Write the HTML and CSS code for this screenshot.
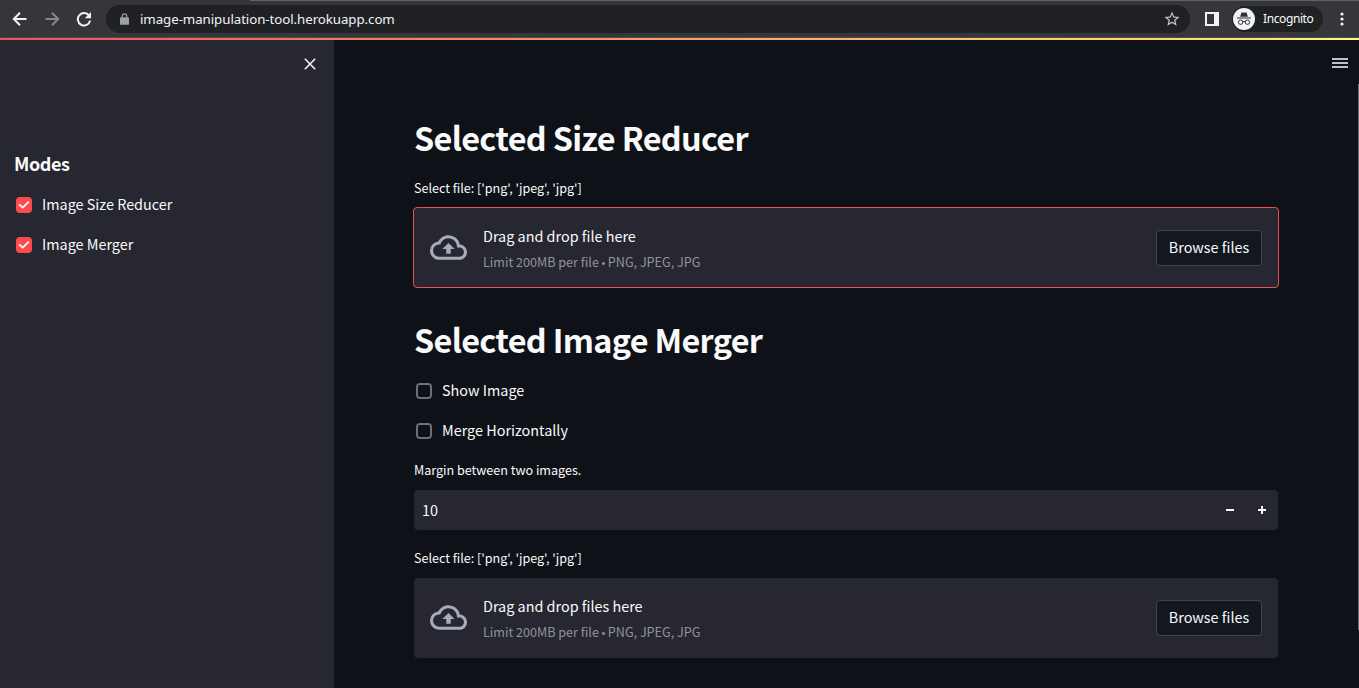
FILE: index.html
```
<!DOCTYPE html>
<html lang="en">
<head>
<meta charset="utf-8">
<title>Image Manipulation Tool</title>
<link rel="stylesheet" href="styles.css">
</head>
<body>
<header class="browser">
  <svg class="nav back" viewBox="0 0 16 16"><path d="M14.500 8H2M8 1.800 1.800 8 8 14.200"/></svg>
  <svg class="nav forward" viewBox="0 0 16 16"><path d="M1.500 8H14M8 1.800 14.200 8 8 14.200"/></svg>
  <svg class="nav reload" viewBox="0 0 16 16"><path d="M13.300 5A6.200 6.200 0 1 0 14.100 9.600"/><path class="solid" d="M15 1v6.200H8.800z"/></svg>
  <div class="address">
    <svg class="lock" viewBox="0 0 10 13"><path d="M1 4.500h8a1 1 0 0 1 1 1V12a1 1 0 0 1-1 1H1a1 1 0 0 1-1-1V5.500a1 1 0 0 1 1-1z"/><path class="shackle" d="M2.500 5V3.200a2.500 2.500 0 0 1 5 0V5"/></svg>
    <span class="url">image-manipulation-tool.herokuapp.com</span>
    <svg class="star" viewBox="0 0 24 24"><path d="M22 9.240l-7.190-.62L12 2 9.190 8.630 2 9.240l5.460 4.730L5.820 21 12 17.270 18.180 21l-1.630-7.030zM12 15.400l-3.760 2.270 1-4.280-3.320-2.880 4.380-.38L12 6.100l1.710 4.040 4.380.38-3.320 2.880 1 4.280z"/></svg>
  </div>
  <svg class="panel" viewBox="0 0 14 14"><path fill-rule="evenodd" d="M0 0h14v14H0zM2 2v10h7V2z"/></svg>
  <div class="incognito">
    <svg class="avatar" viewBox="0 0 22 22"><circle cx="11" cy="11" r="11" fill="#f1f3f4"/><path fill="#303134" d="M7.100 8.700 8.300 4.900c.1-.5.600-.7 1-.5l1.700.4 1.700-.4c.4-.2.9 0 1 .5l1.200 3.800zM4 9.500h14v1H4z"/><g fill="none" stroke="#303134"><circle cx="7.600" cy="14.200" r="2.200"/><circle cx="14.400" cy="14.200" r="2.200"/><path d="M9.800 13.900q1.200-.7 2.400 0"/></g></svg>
    <span>Incognito</span>
  </div>
  <svg class="dots" viewBox="0 0 4 14"><circle cx="2" cy="2" r="1.600"/><circle cx="2" cy="7" r="1.600"/><circle cx="2" cy="12" r="1.600"/></svg>
</header>
<div class="decoration"></div>
<div class="app">
  <aside class="sidebar">
    <div class="close-row"><svg class="close" viewBox="0 0 12 12"><path d="M.8.8l10.400 10.400M11.200.8.8 11.200"/></svg></div>
    <h3 class="modes">Modes</h3>
    <label class="check"><span class="box checked"><svg viewBox="0 0 16 16"><path d="M3.600 7.800 6.700 10.700l5.600-5.500"/></svg></span><span class="check-text">Image Size Reducer</span></label>
    <label class="check"><span class="box checked"><svg viewBox="0 0 16 16"><path d="M3.600 7.800 6.700 10.700l5.600-5.500"/></svg></span><span class="check-text">Image Merger</span></label>
  </aside>
  <main class="main">
    <div class="content">
      <h1 class="title reducer-title">Selected Size Reducer</h1>
      <p class="label">Select file: ['png', 'jpeg', 'jpg']</p>
      <section class="dropzone active">
        <svg class="cloud" viewBox="0 0 24 24"><path d="M19.350 10.040A7.490 7.490 0 0 0 12 4C9.110 4 6.600 5.640 5.350 8.040A5.994 5.994 0 0 0 0 14c0 3.310 2.690 6 6 6h13c2.760 0 5-2.240 5-5 0-2.640-2.050-4.780-4.650-4.960zM19 18H6c-2.210 0-4-1.790-4-4s1.790-4 4-4h.710C7.370 7.690 9.480 6 12 6c3.040 0 5.500 2.460 5.500 5.500v.5H19c1.660 0 3 1.340 3 3s-1.340 3-3 3zM8 13h2.550v3h2.900v-3H16l-4-4z"/></svg>
        <div class="drop-text"><span class="drop-title">Drag and drop file here</span><small class="limit">Limit 200MB per file <span class="bullet">•</span> PNG, JPEG, JPG</small></div>
        <button class="browse">Browse files</button>
      </section>
      <h1 class="title merger-title">Selected Image Merger</h1>
      <label class="check"><span class="box"></span><span class="check-text">Show Image</span></label>
      <label class="check"><span class="box"></span><span class="check-text">Merge Horizontally</span></label>
      <p class="label margin-label">Margin between two images.</p>
      <div class="number"><span class="value">10</span>
        <svg class="step" viewBox="0 0 8 8"><path d="M0 4h8"/></svg>
        <svg class="step" viewBox="0 0 8 8"><path d="M0 4h8M4 0v8"/></svg>
      </div>
      <p class="label files-label">Select file: ['png', 'jpeg', 'jpg']</p>
      <section class="dropzone">
        <svg class="cloud" viewBox="0 0 24 24"><path d="M19.350 10.040A7.490 7.490 0 0 0 12 4C9.110 4 6.600 5.640 5.350 8.040A5.994 5.994 0 0 0 0 14c0 3.310 2.690 6 6 6h13c2.760 0 5-2.240 5-5 0-2.640-2.050-4.780-4.650-4.960zM19 18H6c-2.210 0-4-1.790-4-4s1.790-4 4-4h.710C7.370 7.690 9.480 6 12 6c3.040 0 5.500 2.460 5.500 5.500v.5H19c1.660 0 3 1.340 3 3s-1.340 3-3 3zM8 13h2.550v3h2.900v-3H16l-4-4z"/></svg>
        <div class="drop-text"><span class="drop-title">Drag and drop files here</span><small class="limit">Limit 200MB per file <span class="bullet">•</span> PNG, JPEG, JPG</small></div>
        <button class="browse">Browse files</button>
      </section>
    </div>
    <svg class="menu" viewBox="0 0 16 10"><path d="M0 1h16M0 5h16M0 9h16"/></svg>
    <div class="scrollbar"></div>
  </main>
</div>
</body>
</html>
```
FILE: styles.css
```
* { box-sizing: border-box; }
body {
  margin: 0;
  height: 688px;
  overflow: hidden;
  display: flex;
  flex-direction: column;
  background: #0e1117;
  color: #fafafa;
  font: 14.4px/24px "Noto Sans CJK SC", "Noto Sans", sans-serif;
}
h1, h3, p { margin: 0; }
svg { display: block; flex: none; }

.browser {
  height: 38px;
  flex: none;
  display: flex;
  align-items: center;
  padding: 1px 0 1px 12px;
  background: linear-gradient(90deg, #35363a 250px, #5f6165 250px) 0 0 / 100% 1px no-repeat #35363a;
  border-bottom: 1px solid #4a4b4f;
  font-family: "Noto Sans", sans-serif;
}
.nav { width: 16px; height: 16px; margin-right: 16px; fill: none; stroke: #f1f3f4; stroke-width: 2; }
.forward { stroke: #85878a; }
.reload { margin-right: 14px; }
.reload .solid { fill: #f1f3f4; stroke: none; }
.address {
  width: 1084px;
  height: 28px;
  display: flex;
  align-items: center;
  padding: 0 9px 0 14px;
  border-radius: 14px;
  background: #202124;
}
.lock { width: 9px; height: 12px; fill: #9aa0a6; overflow: visible; }
.lock .shackle { fill: none; stroke: #9aa0a6; stroke-width: 1.4; }
.url { margin-left: 11px; flex: 1; font-size: 13.3px; color: #f1f3f4; letter-spacing: -.07px; }
.star { width: 18px; height: 18px; fill: #c4c7ca; }
.panel { width: 14px; height: 14px; margin-left: 15px; fill: #f1f3f4; }
.incognito {
  width: 91px;
  height: 26px;
  margin-left: 13px;
  display: flex;
  align-items: center;
  gap: 8px;
  padding-left: 1px;
  border-radius: 13px;
  background: #202124;
  font-size: 12px;
  letter-spacing: -.4px;
}
.avatar { width: 22px; height: 22px; }
.dots { width: 4px; height: 14px; margin-left: 17px; fill: #f1f3f4; }

.decoration { height: 2px; flex: none; background: linear-gradient(90deg, #f0505c, #ffe37b 93%, #fff78a); }

.app { flex: 1; display: flex; min-height: 0; }
.sidebar { width: 334px; background: #262730; padding: 18px 14px 0; }
.close-row { display: flex; justify-content: flex-end; padding-right: 4px; }
.close { width: 12px; height: 12px; fill: none; stroke: #fafafa; stroke-width: 1.5; }
.modes { margin-top: 81px; margin-bottom: 18px; height: 24px; font-size: 18px; font-weight: 700; letter-spacing: -.4px; }

.check { display: flex; align-items: center; height: 24px; margin-bottom: 16px; padding-left: 2px; gap: 10px; }
.check-text { padding-bottom: 2px; }
.box { width: 16px; height: 16px; border: 2px solid #6d6f78; border-radius: 4px; flex: none; }
.checked { border: 0; background: #ff4b4b; }
.checked svg { width: 16px; height: 16px; fill: none; stroke: #fff; stroke-width: 1.8; stroke-linecap: round; stroke-linejoin: round; }

.main { flex: 1; position: relative; padding: 77px 0 0 80px; }
.content { width: 864px; }
.title { height: 44px; line-height: 40px; font-size: 32.4px; font-weight: 700; letter-spacing: -.68px; white-space: nowrap; }
.label { height: 20px; line-height: 20px; font-size: 12.6px; letter-spacing: -.02px; }
.reducer-title { margin-bottom: 17px; }
.merger-title { margin-top: 31px; margin-bottom: 16px; }
.margin-label { margin-top: 17px; margin-bottom: 10px; }
.files-label { margin: 18px 0 10px; }

.dropzone { height: 80px; display: flex; align-items: center; padding: 0 16px; background: #262730; border-radius: 4px; }
.dropzone.active { height: 81px; margin: 9px -1px 0; border: 1px solid #e9505a; padding: 1px 16px 0; }
.cloud { width: 37px; height: 37px; margin-bottom: 2px; fill: #a9abbb; }
.drop-text { flex: 1; display: flex; flex-direction: column; margin-left: 16px; }
.drop-title { height: 26px; line-height: 26px; }
.limit { height: 24px; line-height: 26px; font-size: 12.6px; color: #92939a; }
.bullet { font-family: "Liberation Sans", sans-serif; font-size: 11px; margin: 0 -.3px; }
.browse {
  width: 106px;
  height: 36px;
  padding: 0 0 2px;
  border: 1px solid #42434b;
  border-radius: 4px;
  background: #13171f;
  color: #fafafa;
  font: inherit;
}

.number { height: 40px; display: flex; align-items: center; padding: 0 12px 0 8px; background: #262730; border-radius: 4px; }
.value { flex: 1; }
.step { width: 8px; height: 8px; margin-left: 24px; stroke: #fafafa; stroke-width: 2; }

.menu { position: absolute; right: 11px; top: 18px; width: 16px; height: 10px; stroke: #fafafa; stroke-width: 1.7; }
.scrollbar { position: absolute; right: 0; top: 44px; width: 1px; height: 546px; background: #6b6c74; }
```
